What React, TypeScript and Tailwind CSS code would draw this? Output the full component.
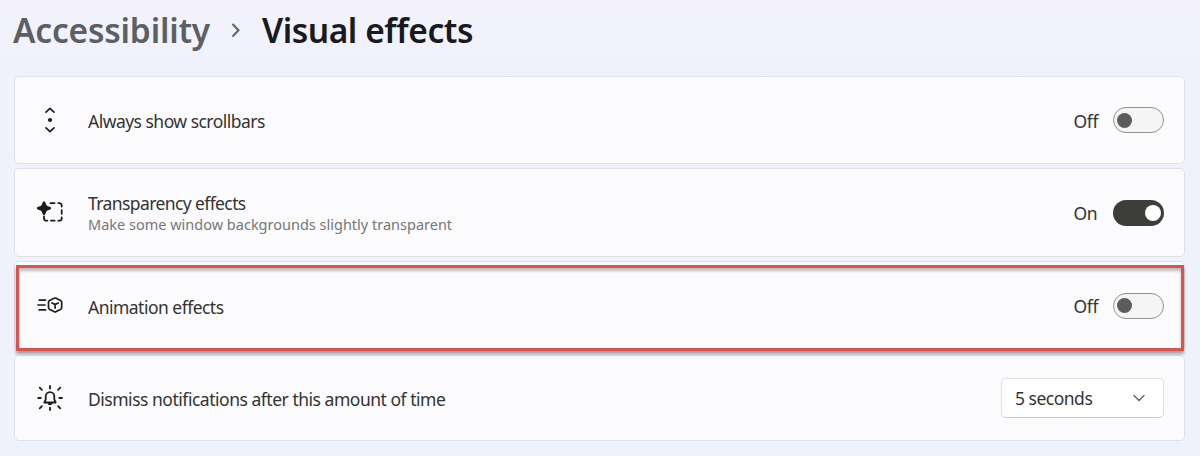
import type { ReactNode } from "react";
import { clsx } from "clsx";

function ScrollbarsIcon() {
  return (
    <svg width="28" height="28" viewBox="0 0 28 28" fill="none" stroke="#1c1c1c" strokeWidth="1.7" strokeLinecap="round" strokeLinejoin="round">
      <path d="M10 6.2 14 2.400l4 3.800M10 21.800l4 3.800 4-3.800" />
      <circle cx="14" cy="14" r="2.1" fill="#1c1c1c" stroke="none" />
    </svg>
  );
}

function TransparencyIcon() {
  return (
    <svg className="relative -top-px" width="28" height="28" viewBox="0 0 28 28" fill="none" stroke="#1c1c1c" strokeWidth="1.8" strokeLinecap="round">
      <path d="M14.5 5.2h4M22.3 5.2h1.2a2.2 2.2 0 0 1 2.2 2.2v1.2M25.7 12.2v3.6M25.7 19.3v1.2a2.2 2.2 0 0 1-2.2 2.2h-1.2M18.6 22.7H15M11.4 22.7h-1.2A2.2 2.2 0 0 1 8 20.5v-2" />
      <path
        d="M8 3.200c.6 0 .9.3 1.100.8l1.300 2.900c.2.500.5.800 1 1l2.900 1.200c1.100.4 1.100 1.900 0 2.300l-2.900 1.200c-.5.2-.8.500-1 1L9.100 16.500c-.4 1-1.800 1-2.200 0L5.600 13.600c-.2-.5-.5-.8-1-1l-2.900-1.200c-1.100-.4-1.100-1.900 0-2.300l2.900-1.200c.5-.2.8-.5 1-1L6.900 4c.2-.5.5-.8 1.100-.8Z"
        fill="#1c1c1c"
        stroke="none"
      />
    </svg>
  );
}

function AnimationIcon() {
  return (
    <svg className="relative -top-px" width="28" height="28" viewBox="0 0 28 28" fill="none" stroke="#1c1c1c" strokeWidth="1.7" strokeLinecap="round" strokeLinejoin="round">
      <path d="M3.200 9.100h6.300M2 14h7M3.200 18.900h6.300" />
      <path d="M18.100 7.200q1-.4 2 0l4.400 2.200q1.200.6 1.200 1.900v5.200q0 1.300-1.200 1.900l-4.400 2.200q-1 .4-2 0l-4.400-2.200q-1.200-.6-1.200-1.900v-5.200q0-1.300 1.200-1.900Z" />
      <path d="m15.900 11.900 3.200 1.500 3.200-1.500M19.100 13.400v3.700" />
    </svg>
  );
}

function NotificationIcon() {
  return (
    <svg width="28" height="28" viewBox="0 0 28 28" fill="none" stroke="#1c1c1c" strokeWidth="1.8" strokeLinecap="round" strokeLinejoin="round">
      <path d="M14 2v2.500M14 23.700v2.300M2.200 14h2.600M23.400 14H26M3.700 3.700l2.200 2.200M24.300 3.700l-2.200 2.200M3.700 24.300l2.200-2.200M24.300 24.300l-2.200-2.200" />
      <path d="m8.300 18.500 1.400-2.900v-3.100a4.300 4.300 0 0 1 8.600 0v3.100l1.400 2.900ZM12.500 18.900a1.500 1.500 0 0 0 3 0" />
    </svg>
  );
}

function Toggle({ on = false }: { on?: boolean }) {
  return (
    <div className="flex items-center">
      <span className="w-[39.500px] pt-[2px] text-[17.500px] tracking-[-0.300px]">{on ? "On" : "Off"}</span>
      <div
        role="switch"
        aria-checked={on}
        className={clsx(
          "flex h-[26px] w-[51px] items-center rounded-full",
          on
            ? "justify-end bg-[#3d3d3a] pr-[3px]"
            : "border-[1.500px] border-[#929292] bg-[#f5f5f5] pl-[3px]"
        )}
      >
        <div className={clsx("rounded-full", on ? "size-4 bg-white" : "size-[15px] bg-[#5c5c5c]")} />
      </div>
    </div>
  );
}

type RowProps = {
  icon: ReactNode;
  label: ReactNode;
  children: ReactNode;
  className?: string;
};

function Row({ icon, label, children, className }: RowProps) {
  return (
    <div
      className={clsx(
        "flex items-center rounded-[5px] border border-[#e0e2ea] bg-[#fbfbfd] pr-[20px] pl-[21px]",
        className
      )}
    >
      {icon}
      <div className="ml-[24px] flex-1">{label}</div>
      {children}
    </div>
  );
}

export default function App() {
  return (
    <main className="h-[456px] w-[1200px] overflow-hidden bg-linear-to-b from-[#f3f2fb] to-[#eff2fb] to-20% pr-[15px] pl-[14px] font-['Noto_Sans','Open_Sans',sans-serif] text-[#333] whitespace-nowrap">
      <header className="flex h-[76px] items-start pt-[7px] text-[33.500px] leading-[46px] font-semibold">
        <span className="-ml-px w-[218px] tracking-[-0.200px] text-[#5c5f66]">Accessibility</span>
        <svg className="mt-[16px] w-[10px]" width="10" height="15" viewBox="0 0 10 15" fill="none" stroke="#5c5f66" strokeWidth="2">
          <path d="m1.500 1 6 6.300-6 6.300" />
        </svg>
        <h1 className="ml-[21px] tracking-[-0.450px] text-[#191a20]">Visual effects</h1>
      </header>

      <Row
        className="h-[88px]"
        icon={<ScrollbarsIcon />}
        label={<p className="pt-[3px] text-[17.500px] tracking-[-0.520px]">Always show scrollbars</p>}
      >
        <Toggle />
      </Row>

      <Row
        className="mt-[4px] h-[89px]"
        icon={<TransparencyIcon />}
        label={
          <>
            <p className="pt-px text-[17.500px] leading-[22px] tracking-[-0.600px]">Transparency effects</p>
            <p className="text-[14.500px] leading-[20px] text-[#777]">Make some window backgrounds slightly transparent</p>
          </>
        }
      >
        <Toggle on />
      </Row>

      <div className="relative mt-[4px]">
        <Row
          className="h-[89px]"
          icon={<AnimationIcon />}
          label={<p className="pt-[3px] text-[17.500px] tracking-[-0.520px]">Animation effects</p>}
        >
          <Toggle />
        </Row>
        <div className="absolute top-[4px] right-px bottom-[-1px] left-[2px] border-[3px] border-[#d9534f] shadow-[0_3px_3px_rgba(0,0,0,0.35),inset_0_3px_3px_rgba(0,0,0,0.25)]" />
      </div>

      <Row
        className="mt-[5px] h-[86px]"
        icon={<NotificationIcon />}
        label={<p className="pt-[2px] text-[17.500px] tracking-[-0.480px]">Dismiss notifications after this amount of time</p>}
      >
        <button className="flex h-[40px] w-[163px] items-center justify-between rounded-[5px] border border-[#dfdfe4] border-b-[#cccdd2] bg-white pr-[18px] pl-[13px] text-[17.500px] tracking-[-0.500px]">
          5 seconds
          <svg width="12" height="8" viewBox="0 0 12 8" fill="none" stroke="#5c5c5c" strokeWidth="1.300" strokeLinecap="round" strokeLinejoin="round">
            <path d="m1 1.500 5 5 5-5" />
          </svg>
        </button>
      </Row>
    </main>
  );
}
